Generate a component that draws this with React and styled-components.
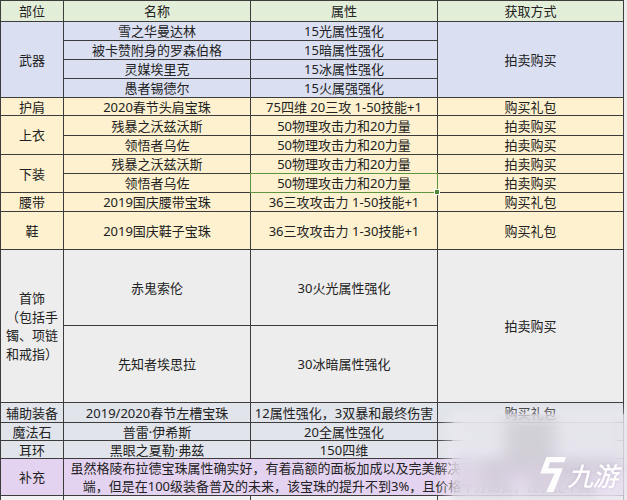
import React from "react";
import styled, { createGlobalStyle, css } from "styled-components";

const Global = createGlobalStyle`
  html, body { margin: 0; padding: 0; overflow: hidden; }
  body {
    background: #ececec;
    font-family: "Noto Sans", "Noto Sans CJK SC", sans-serif;
    color: #222;
  }
`;

const tones = {
  head: "#e3eed8",
  weapon: "#dae0f2",
  yellow: "#fdf1cf",
  gray: "#ededed",
  steel: "#e1e4ea",
  purple: "#e4d3f0",
  blank: "#f3f3f3",
};

const Page = styled.div`
  position: relative;
  width: 627px;
  height: 500px;
  overflow: hidden;
`;

const Sheet = styled.div`
  display: grid;
  width: fit-content;
  grid-template-columns: 62px 186px 186px 185px;
  grid-template-rows: 20px 18px 18px 18px 18px 17px 19px 18px 18px 18px 18px 37px 75px 76px 19px 17px 17px 36px 14px;
  gap: 1px;
  padding: 1px;
  background: #3c3c3c;
`;

const Cell = styled.div`
  display: flex;
  align-items: center;
  justify-content: center;
  text-align: center;
  min-width: 0;
  white-space: nowrap;
  font-size: 13px;
  line-height: 18px;
  color: #222;
  background: ${(p) => tones[p.$tone]};
  grid-column: span ${(p) => p.$cols || 1};
  grid-row: span ${(p) => p.$rows || 1};
  ${(p) =>
    p.$selected &&
    css`
      position: relative;
      z-index: 1;
      outline: 1px solid #5f9440;
      &::after {
        content: "";
        position: absolute;
        right: -3px;
        bottom: -3px;
        width: 4px;
        height: 4px;
        background: #4f8a30;
        border: 1px solid #fff;
      }
    `}
`;

const PartText = styled.div`
  line-height: 18.5px;
  text-align: center;
`;

const NoteCell = styled(Cell)`
  flex-direction: column;
  overflow: hidden;
`;

const NoteLine = styled.span`
  display: block;
  white-space: nowrap;
`;

const Watermark = styled.div`
  position: absolute;
  left: 452px;
  top: 414px;
  width: 175px;
  height: 100px;
  display: flex;
  align-items: flex-end;
  justify-content: flex-end;
  gap: 4px;
  padding: 0 7px 22px 0;
  box-sizing: border-box;
  border-radius: 10px 0 0 10px;
  background: rgba(243, 238, 247, 0.55);
  backdrop-filter: blur(8px);
  box-shadow: -4px 0 10px 4px rgba(240, 235, 245, 0.5);
`;

const LogoMark = styled.svg`
  width: 29px;
  height: 35px;
  flex: none;
`;

const LogoText = styled.span`
  font-family: "Noto Sans CJK SC", sans-serif;
  font-weight: 500;
  font-size: 26px;
  line-height: 34px;
  white-space: nowrap;
  color: rgba(255, 255, 255, 0.96);
  transform: skewX(-14deg);
  letter-spacing: -1px;
  text-shadow: 0 0 3px rgba(150, 120, 170, 0.3);
`;

const cells = [
  { t: "head", c: "部位" },
  { t: "head", c: "名称" },
  { t: "head", c: "属性" },
  { t: "head", c: "获取方式" },

  { t: "weapon", c: "武器", rows: 4 },
  { t: "weapon", c: "雪之华曼达林" },
  { t: "weapon", c: "15光属性强化" },
  { t: "weapon", c: "拍卖购买", rows: 4 },
  { t: "weapon", c: "被卡赞附身的罗森伯格" },
  { t: "weapon", c: "15暗属性强化" },
  { t: "weapon", c: "灵媒埃里克" },
  { t: "weapon", c: "15冰属性强化" },
  { t: "weapon", c: "愚者锡德尔" },
  { t: "weapon", c: "15火属强强化" },

  { t: "yellow", c: "护肩" },
  { t: "yellow", c: "2020春节头肩宝珠" },
  { t: "yellow", c: "75四维 20三攻 1-50技能+1" },
  { t: "yellow", c: "购买礼包" },

  { t: "yellow", c: "上衣", rows: 2 },
  { t: "yellow", c: "残暴之沃兹沃斯" },
  { t: "yellow", c: "50物理攻击力和20力量" },
  { t: "yellow", c: "拍卖购买" },
  { t: "yellow", c: "领悟者乌佐" },
  { t: "yellow", c: "50物理攻击力和20力量" },
  { t: "yellow", c: "拍卖购买" },

  { t: "yellow", c: "下装", rows: 2 },
  { t: "yellow", c: "残暴之沃兹沃斯" },
  { t: "yellow", c: "50物理攻击力和20力量" },
  { t: "yellow", c: "拍卖购买" },
  { t: "yellow", c: "领悟者乌佐" },
  { t: "yellow", c: "50物理攻击力和20力量", selected: true },
  { t: "yellow", c: "拍卖购买" },

  { t: "yellow", c: "腰带" },
  { t: "yellow", c: "2019国庆腰带宝珠" },
  { t: "yellow", c: "36三攻攻击力 1-50技能+1" },
  { t: "yellow", c: "购买礼包" },

  { t: "yellow", c: "鞋" },
  { t: "yellow", c: "2019国庆鞋子宝珠" },
  { t: "yellow", c: "36三攻攻击力 1-30技能+1" },
  { t: "yellow", c: "购买礼包" },

  {
    t: "gray",
    rows: 2,
    c: (
      <PartText>
        首饰
        <br />
        （包括手
        <br />
        镯、项链
        <br />
        和戒指）
      </PartText>
    ),
  },
  { t: "gray", c: "赤鬼索伦" },
  { t: "gray", c: "30火光属性强化" },
  { t: "gray", c: "拍卖购买", rows: 2 },
  { t: "gray", c: "先知者埃思拉" },
  { t: "gray", c: "30冰暗属性强化" },

  { t: "steel", c: "辅助装备" },
  { t: "steel", c: "2019/2020春节左槽宝珠" },
  { t: "steel", c: "12属性强化，3双暴和最终伤害" },
  { t: "steel", c: "购买礼包" },

  { t: "steel", c: "魔法石" },
  { t: "steel", c: "普雷·伊希斯" },
  { t: "steel", c: "20全属性强化" },
  { t: "steel", c: "拍卖购买" },

  { t: "steel", c: "耳环" },
  { t: "steel", c: "黑眼之夏勒·弗兹" },
  { t: "steel", c: "150四维" },
  { t: "steel", c: "拍卖购买" },
];

const noteLines = [
  "虽然格陵布拉德宝珠属性确实好，有着高额的面板加成以及完美解决了全属性强化数值偏低的弊",
  "端，但是在100级装备普及的未来，该宝珠的提升不到3%，且价格十分昂贵，性价比不高。",
];

export default function App() {
  return (
    <>
      <Global />
      <Page>
        <Sheet>
          {cells.map((cell, i) => (
            <Cell key={i} $tone={cell.t} $rows={cell.rows} $selected={cell.selected}>
              {cell.c}
            </Cell>
          ))}
          <Cell $tone="purple">补充</Cell>
          <NoteCell $tone="purple" $cols={3}>
            {noteLines.map((l) => (
              <NoteLine key={l}>{l}</NoteLine>
            ))}
          </NoteCell>
          <Cell $tone="blank" />
          <Cell $tone="blank" />
          <Cell $tone="blank" />
          <Cell $tone="blank" />
        </Sheet>
        <Watermark>
          <LogoMark viewBox="0 0 28 34">
            <path
              d="M9 0 H28 L26.5 5 H12.5 L11 11 H25 L16 34 H9 L17 16 H3 Z"
              fill="rgba(255,255,255,0.95)"
            />
          </LogoMark>
          <LogoText>九游</LogoText>
        </Watermark>
      </Page>
    </>
  );
}
